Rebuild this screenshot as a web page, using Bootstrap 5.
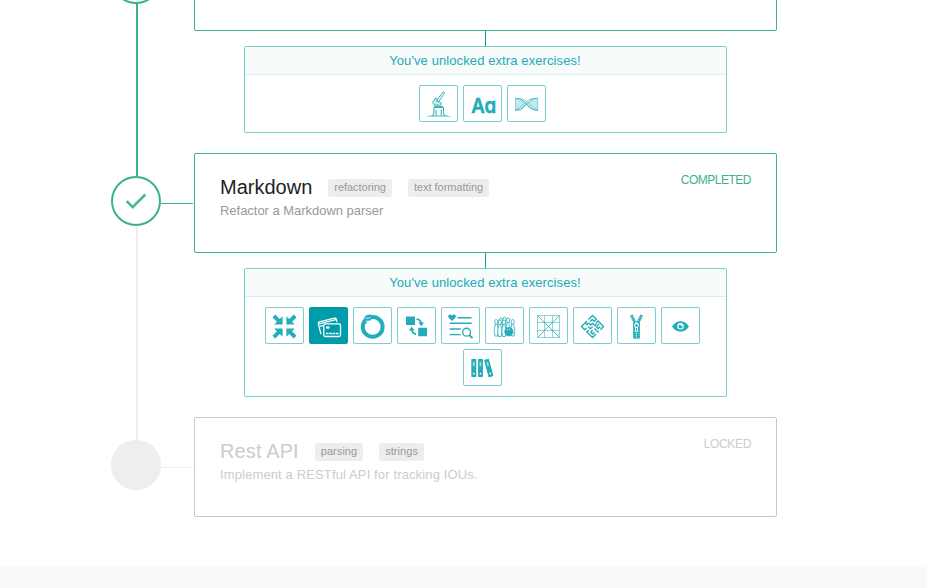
<!DOCTYPE html>
<html lang="en">
<head>
<meta charset="utf-8">
<meta name="viewport" content="width=device-width, initial-scale=1">
<title>Exercises</title>
<link href="https://cdn.jsdelivr.net/npm/bootstrap@5.3.0/dist/css/bootstrap.min.css" rel="stylesheet">
<style>
:root{--done:#3bb092;--aqua:#23a9b8;--aqua-edge:#7ccdd1;--idle:#eee}
body{font-family:"Liberation Sans",Arial,sans-serif;font-size:13px;background:#f9f9f9;height:588px;overflow:hidden}
.track-page{background:#fff;height:567px;padding-left:111px;overflow:hidden}
.track-list{width:666px;margin-top:-69px}
.rail{width:50px}
.rail-line{width:2px;margin-left:25px;background:var(--idle)}
.rail-start{height:23px}
.is-done{background:var(--done)}
.node{width:50px;height:50px;border:2px solid var(--done);background:#fff}
.node-locked{background:var(--idle);border-color:var(--idle)}
.branch{width:32px;height:1px;margin:50px 1px 0 0;background:var(--done)}
.branch-locked{background:var(--idle)}
.exercise{height:100px;border:1px solid var(--done);border-radius:2px;padding:19px 25px}
.exercise h2{font-size:20px;line-height:24px;color:#222;margin:2px 0 0}
.topic{font-size:11px;line-height:16px;letter-spacing:-.03px;padding:0 6px 2px;border-radius:2px;background:#ededed;color:#999;margin-left:16px;margin-top:3px}
.blurb{line-height:18px;color:#999;margin:3px 0 0;letter-spacing:-.03px}
.state{font-size:12px;line-height:14px;letter-spacing:-.5px;color:var(--done)}
.exercise-locked{border-color:#c8c8c8}
.exercise-locked h2,.exercise-locked .blurb,.exercise-locked .state{color:#ccc}
.exercise-locked h2{letter-spacing:.12px}
.exercise-locked .blurb{letter-spacing:.13px}
.exercise-locked .state{letter-spacing:-.35px}
.exercise-locked .topic{letter-spacing:.05px}
.stem{width:1px;height:15px;margin-left:291px;background:#16969f}
.extras{width:483px;margin:0 50px 20px;border:1px solid var(--aqua-edge);border-radius:2px}
.extras-title{height:28px;line-height:27px;background:#f7fbfa;border-bottom:1px solid #d9f0ee;color:var(--aqua);letter-spacing:.1px;padding-right:1px}
.extras-body{gap:5px;padding:10px 6px 10px 0}
.tile{width:39px;height:37px;border:1px solid var(--aqua-edge);border-radius:2px;color:#23adba}
.tile svg{width:37px;height:35px;display:block}
.tile-active{background:#009cab;border-color:#009cab;color:#fff}
.glyph-type{font:600 20.5px Inter,sans-serif;font-feature-settings:"cv11"}
</style>
</head>
<body>
<main class="track-page">
<div class="track-list">

<section class="d-flex">
  <div class="rail d-flex flex-column flex-shrink-0">
    <div class="rail-line rail-start is-done"></div>
    <div class="node rounded-circle flex-shrink-0"></div>
    <div class="rail-line is-done flex-grow-1"></div>
  </div>
  <div class="branch flex-shrink-0"></div>
  <div class="flex-grow-1">
    <div class="exercise"></div>
    <div class="stem"></div>
    <div class="extras">
      <div class="extras-title text-center">You've unlocked extra exercises!</div>
      <div class="extras-body d-flex flex-wrap justify-content-center">
        <div class="tile"><svg viewBox="0 0 37 35" fill="none" stroke="currentColor">
          <path d="M24.5 7 18.5 16M22.7 6.2 16.7 15M22.7 6.2q1.6-.8 1.8.8" stroke-width=".9"/>
          <path d="M12.5 16.5 15.5 12l2 1-1 2 4 1.3 1 2-2 1.500-3-1.200-1.800 1.200z" fill="currentColor" fill-opacity=".25" stroke-width=".9"/>
          <path d="M14 21.500h9.500q-.6 5 1 8.500M14 21.500q.5 5-1.200 8.500M16 24v5.500M21.300 23.500v6M14.500 20.600q4-1 8.500.2" stroke-width="1"/>
          <path d="M7 30.500h23.500M10 29.500h18" stroke-width=".7" opacity=".65"/></svg></div>
        <div class="tile"><svg viewBox="0 0 37 35"><text class="glyph-type" x="7.300" y="26.700" textLength="25" lengthAdjust="spacingAndGlyphs" fill="currentColor" stroke="currentColor" stroke-width=".5">Aa</text></svg></div>
        <div class="tile"><svg viewBox="0 0 37 35" fill="none" stroke="currentColor">
          <path d="M7.500 12.500Q15 12.500 18.500 18.300 15 24.500 7.500 24.500zM29.700 12.500Q22 12.500 18.500 18.300 22 24.500 29.700 24.500z" fill="currentColor" fill-opacity=".28" stroke="none"/>
          <path d="M7.500 12.300q5.500-.3 9 3.700l4 4.500q3.500 4 9.200 4M7.500 24.500q5.500 0 9-4l4-4.500q3.500-4 9.200-3.700" stroke-width=".9"/>
          <path d="M11.500 12.500q5 .2 8.500 4l4.200 4.500q2 2.200 5.500 2.500M25.500 12.500q-5 .2-8.500 4L12.800 21q-2 2.200-5.300 2.500M7.500 12.500v12M29.700 12.500v12" stroke-width=".6" opacity=".75"/></svg></div>
      </div>
    </div>
  </div>
</section>

<section class="d-flex">
  <div class="rail d-flex flex-column flex-shrink-0">
    <div class="rail-line rail-start is-done"></div>
    <div class="node rounded-circle flex-shrink-0">
      <svg class="d-block" width="46" height="46" viewBox="0 0 46 46" fill="none" stroke="#4ab598" stroke-width="2.600"><path d="m13.700 23.200 6 6L32.300 16.500"/></svg>
    </div>
    <div class="rail-line flex-grow-1"></div>
  </div>
  <div class="branch flex-shrink-0"></div>
  <div class="flex-grow-1">
    <div class="exercise d-flex justify-content-between">
      <div>
        <div class="d-flex align-items-center"><h2 class="fw-normal">Markdown</h2><span class="topic">refactoring</span><span class="topic">text formatting</span></div>
        <p class="blurb">Refactor a Markdown parser</p>
      </div>
      <div class="state">COMPLETED</div>
    </div>
    <div class="stem"></div>
    <div class="extras">
      <div class="extras-title text-center">You've unlocked extra exercises!</div>
      <div class="extras-body d-flex flex-wrap justify-content-center">
        <div class="tile"><svg viewBox="0 0 37 35" fill="currentColor">
          <defs><path id="inward" d="M6.500 9.300 9.300 6.500 13.700 10.900 16.600 8.200V16.600H8.200L10.900 13.700z"/></defs>
          <use href="#inward"/><use href="#inward" transform="matrix(-1 0 0 1 37 0)"/><use href="#inward" transform="matrix(1 0 0 -1 0 37)"/><use href="#inward" transform="rotate(180 18.500 18.500)"/></svg></div>
        <div class="tile tile-active"><svg viewBox="0 0 37 35" fill="none" stroke="currentColor" stroke-width="1.300">
          <path d="M11.500 25.500h-.7L8.300 15.700q-.3-1.500 1-1.800L24.500 10.200q1.400-.2 1.800 1l.7 2.800M10 18.300l3.500-.9"/>
          <path d="M9 15.800 26 11.600" stroke-width="1.300"/>
          <rect x="13.800" y="15.800" width="16.700" height="12.700" rx="1.500"/>
          <path d="M16 19.500h3.500" stroke-width="2.200"/><path d="M16 25.500h12.500" stroke-dasharray="2.600 .7"/></svg></div>
        <div class="tile"><svg viewBox="0 0 37 35" fill="none" stroke="currentColor">
          <circle cx="18.700" cy="18.900" r="9.900" stroke-width="4"/>
          <path d="M9.800 14.500q-1-6 4-7.700 4.500-.8 5.500 2l-3 3.700-3 .2-1 3z" fill="currentColor" stroke="none"/>
          <path d="m10.700 11 2-1.500 1 1.500 1.800-2 .8 1.700M11.500 13.500l2-1" stroke="#fff" stroke-width=".8" opacity=".75"/></svg></div>
        <div class="tile"><svg viewBox="0 0 37 35" fill="currentColor">
          <path d="M8 8.500h9V17H8zM20.200 19.800h8.800v8.500h-8.800z"/>
          <path d="M18.500 11.200q4.300.2 4.700 4.500M18 26q-4-.3-4.300-5" fill="none" stroke="currentColor" stroke-width="1.800"/>
          <path d="m20.300 14.500h5.500L23.500 18.200zM10.800 22.500l2.900-3.800L16.500 22.500z"/></svg></div>
        <div class="tile"><svg viewBox="0 0 37 35" fill="none" stroke="currentColor" stroke-width="1.400">
          <path d="M10 13 6.500 9.500q-1-2.500 1.500-3 1.500 0 2 1.200.8-1.200 2.200-1.200 2.500.7 1.300 3z" fill="currentColor" stroke="none"/>
          <path d="M15.500 9.800h14M7.700 15.300h22M7.700 21h11M7.700 26.600h11"/><circle cx="24.600" cy="24.200" r="3.900"/><path d="m27.300 27 3.200 3.200" stroke-width="1.800"/></svg></div>
        <div class="tile"><svg viewBox="0 0 37 35" fill="none" stroke="currentColor" stroke-width=".8">
          <defs><path id="pin" d="M0 0q1.700 0 1.500 2L.9 5.500q1.400 3.500 1.200 6.500l-.8 4.500h-2.600l-.8-4.500q-.2-3 1.200-6.500L-1.500 2q-.2-2 1.500-2zM-1 4.500h2"/></defs>
          <g fill="#fff"><use href="#pin" x="18.500" y="9.200"/><use href="#pin" x="14.900" y="10"/><use href="#pin" x="22.100" y="10"/><use href="#pin" x="10.300" y="11.500"/><use href="#pin" x="26.700" y="11.500"/><use href="#pin" x="13.800" y="12"/><use href="#pin" x="18" y="12"/></g>
          <circle cx="22.900" cy="23.700" r="4.200" fill="currentColor"/><path d="M21.500 21v1.200M23.500 20.800V22" stroke="#fff"/></svg></div>
        <div class="tile"><svg viewBox="0 0 37 35" fill="none" stroke="currentColor" stroke-width=".8">
          <path d="M7.500 7.500h22v22h-22zM14.500 7.500v22M22.500 7.500v22M7.500 14.500h22M7.500 22.500h22" opacity=".65"/><path d="m7.500 7.500 22 22M29.500 7.500l-22 22"/></svg></div>
        <div class="tile"><svg viewBox="0 0 37 35" fill="none" stroke="currentColor" stroke-width="1.400">
          <g transform="rotate(45 18.500 18.500)"><path d="M10.700 16.500v-5.800H16v3h-2.700v3M18.500 13.700v-3h7.800v4.500M10.700 18.500v7.800h4.500v-2.700M17.500 26.300h8.800v-5M26.300 17.300v2M13.300 18.700v2.300h-2.500M13.300 18.700h3v-2.500h3v-2.500M21.300 12v4h2.700v-3M21.300 18.500h5M18.700 18.500v3h-3M21.300 21v2.700H24v-2.700M18.500 26v-2.500"/></g></svg></div>
        <div class="tile"><svg viewBox="0 0 37 35" fill="none" stroke="currentColor">
          <path d="M13.500 7q1.500 4 3 6.500V30.500M23.500 7q-1.500 4-3 6.500V30.500" stroke-width="3" stroke-dasharray="1.800 .3"/>
          <path d="M17 14h3l1.500 3-1 3v3l-2 2-2-2v-3l-1-3z" fill="#fff" stroke-width="1"/><circle cx="18.500" cy="17.500" r="1" fill="currentColor"/><path d="M18.500 20v3M16 26h5M16 28h5M16 30h5" stroke-width="1"/></svg></div>
        <div class="tile"><svg viewBox="0 0 37 35" fill="currentColor">
          <path d="M10 18.500q3.500-5.200 8.500-5.200t8.500 5.200q-3.500 5.200-8.500 5.200T10 18.500z"/><circle cx="18.500" cy="18.300" r="3.200" fill="#fff"/><circle cx="18.500" cy="18.500" r="2"/><circle cx="19.500" cy="17" r="1" fill="#fff"/></svg></div>
        <div class="tile"><svg viewBox="0 0 37 35" fill="currentColor">
          <defs><g id="binder"><rect width="5" height="18" rx=".7"/><rect x="1.500" y="2.700" width="2" height="4.500" fill="#fff" opacity=".5"/><circle cx="2.500" cy="14.700" r=".9" fill="#fff"/></g></defs>
          <use href="#binder" x="7.300" y="9"/><use href="#binder" x="14" y="9"/><use href="#binder" transform="translate(20 10) rotate(-15)"/></svg></div>
      </div>
    </div>
  </div>
</section>

<section class="d-flex">
  <div class="rail d-flex flex-column flex-shrink-0">
    <div class="rail-line rail-start"></div>
    <div class="node node-locked rounded-circle flex-shrink-0"></div>
  </div>
  <div class="branch branch-locked flex-shrink-0"></div>
  <div class="flex-grow-1">
    <div class="exercise exercise-locked d-flex justify-content-between">
      <div>
        <div class="d-flex align-items-center"><h2 class="fw-normal">Rest API</h2><span class="topic">parsing</span><span class="topic">strings</span></div>
        <p class="blurb">Implement a RESTful API for tracking IOUs.</p>
      </div>
      <div class="state">LOCKED</div>
    </div>
  </div>
</section>

</div>
</main>
<script src="https://cdn.jsdelivr.net/npm/bootstrap@5.3.0/dist/js/bootstrap.bundle.min.js"></script>
</body>
</html>
